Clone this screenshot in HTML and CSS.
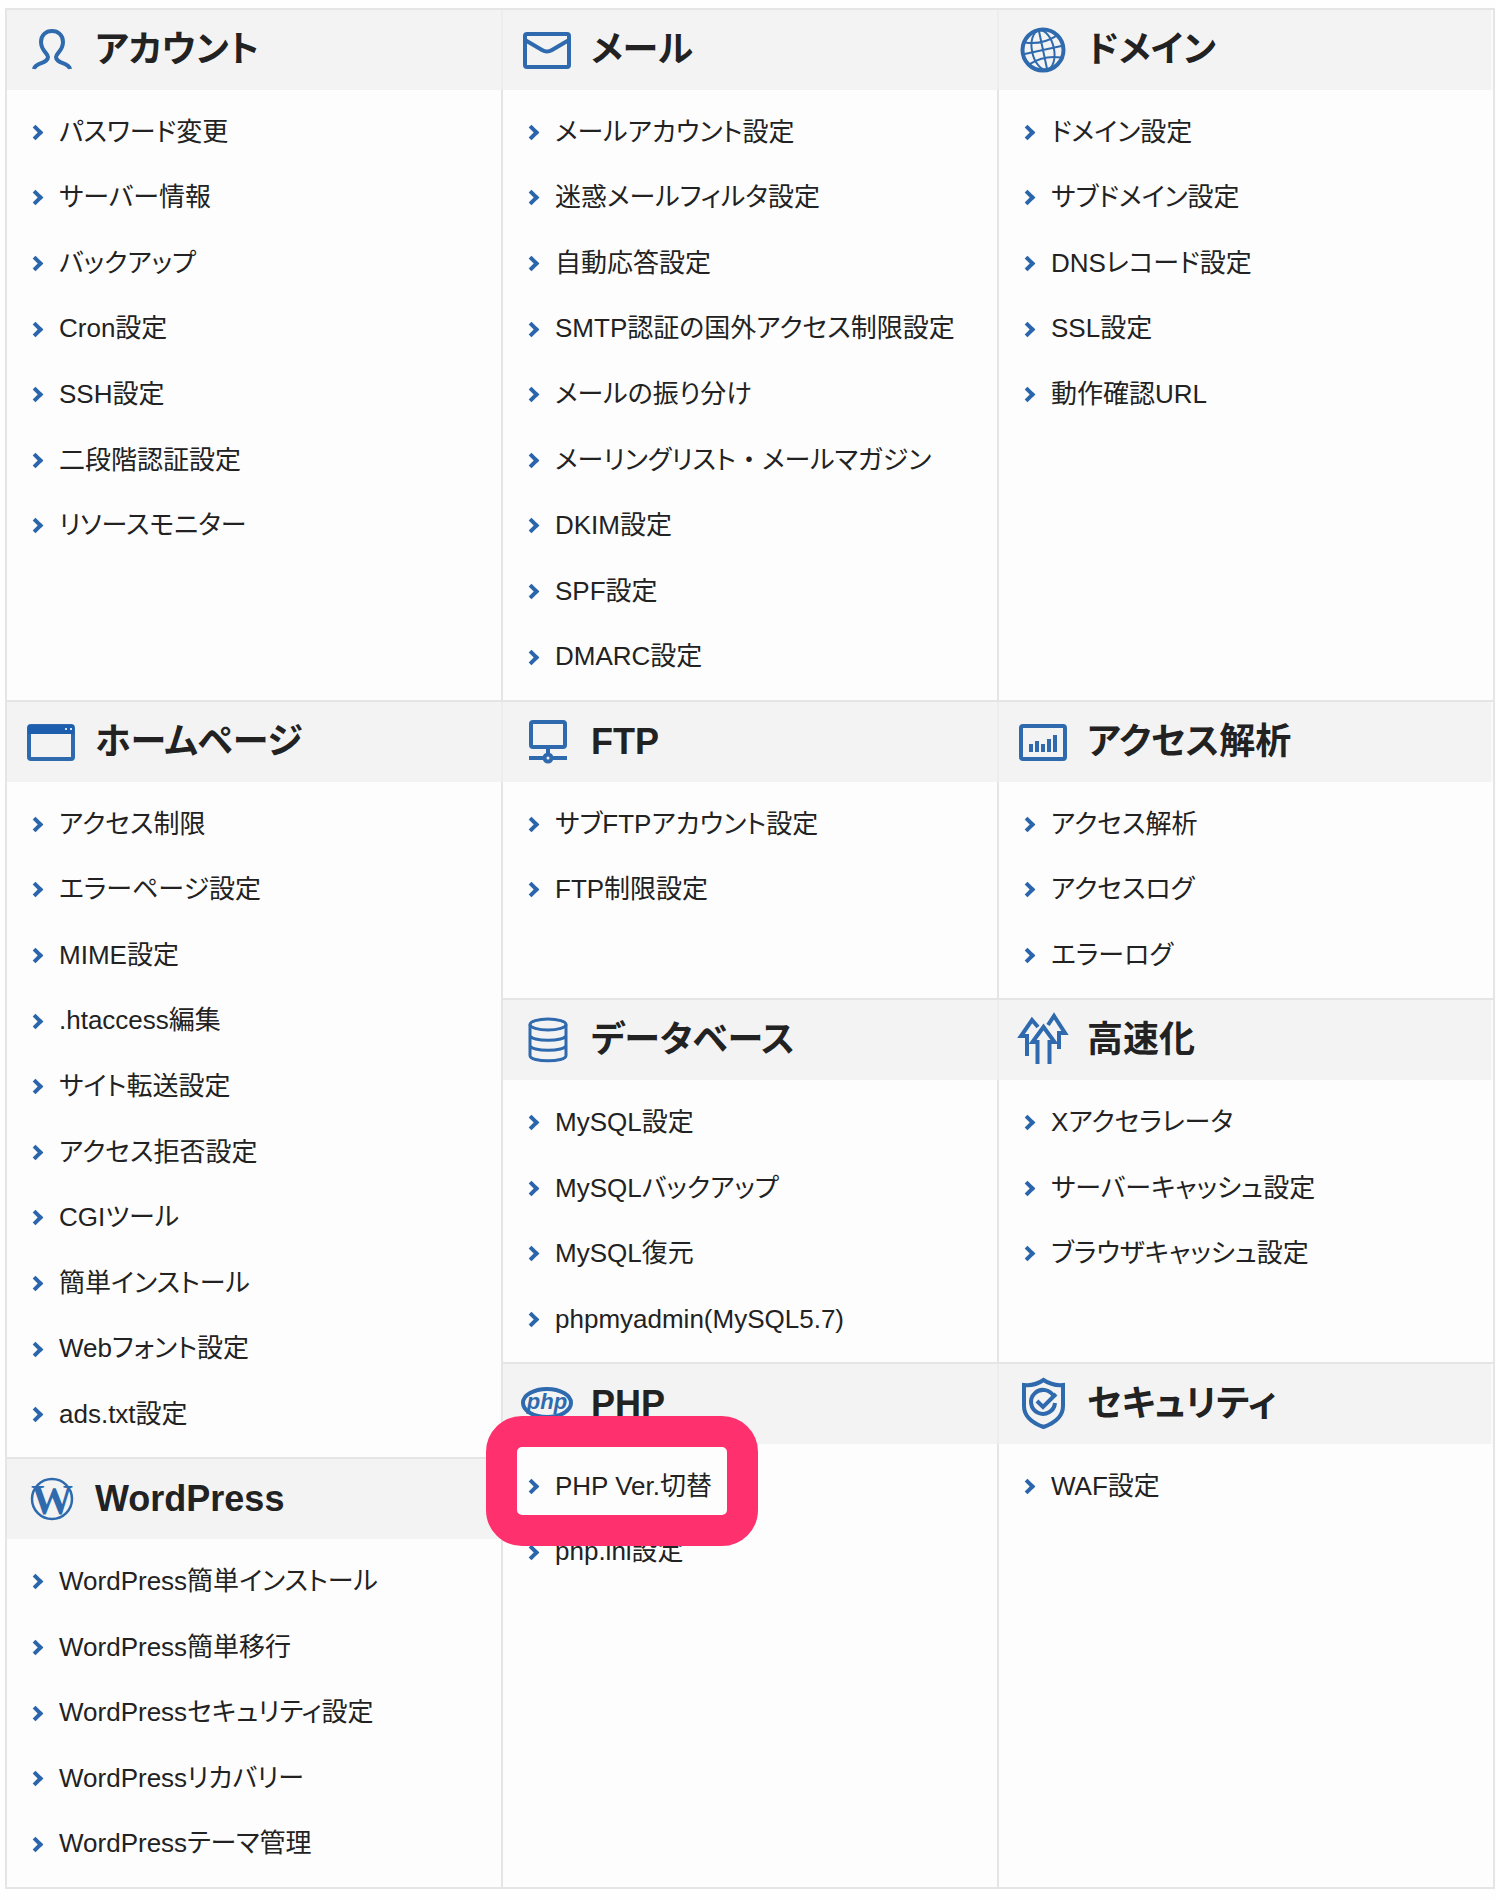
FILE: index.html
```
<!DOCTYPE html>
<html lang="ja">
<head>
  <meta charset="UTF-8">
  <title>サーバーパネル</title>
  <link rel="stylesheet" href="styles.css">
</head>
<body>
  <main class="menu">
    <section class="panel">
      <h2 class="panel-head">
        <svg class="icon" viewBox="0 0 48 48"><path d="M7 43c1-7 14-5 14-12 0-4-7-6-7-15 0-7 5-11 11-11s11 4 11 11c0 9-7 11-7 15 0 7 13 5 14 12"/></svg>
        アカウント
      </h2>
      <ul class="links">
        <li><a href="#">パスワード変更</a></li>
        <li><a href="#">サーバー情報</a></li>
        <li><a href="#">バックアップ</a></li>
        <li><a href="#">Cron設定</a></li>
        <li><a href="#">SSH設定</a></li>
        <li><a href="#">二段階認証設定</a></li>
        <li><a href="#">リソースモニター</a></li>
      </ul>
    </section>
    <section class="panel">
      <h2 class="panel-head">
        <svg class="icon" viewBox="0 0 48 48"><rect x="2" y="8" width="44" height="33" rx="2"/><path d="M2 14l17 10q5 3 10 0l17-10"/></svg>
        メール
      </h2>
      <ul class="links">
        <li><a href="#">メールアカウント設定</a></li>
        <li><a href="#">迷惑メールフィルタ設定</a></li>
        <li><a href="#">自動応答設定</a></li>
        <li><a href="#">SMTP認証の国外アクセス制限設定</a></li>
        <li><a href="#">メールの振り分け</a></li>
        <li><a href="#">メーリングリスト<span class="dot">・</span>メールマガジン</a></li>
        <li><a href="#">DKIM設定</a></li>
        <li><a href="#">SPF設定</a></li>
        <li><a href="#">DMARC設定</a></li>
      </ul>
    </section>
    <section class="panel panel-last">
      <h2 class="panel-head">
        <svg class="icon" viewBox="0 0 48 48"><circle cx="24" cy="24" r="20.5"/><g stroke-width="2" transform="rotate(-12 24 24)"><path d="M24 4v40M4 24h40M8 13q16 6 32 0M8 35q16-6 32 0"/><ellipse cx="24" cy="24" rx="11" ry="20"/></g></svg>
        ドメイン
      </h2>
      <ul class="links">
        <li><a href="#">ドメイン設定</a></li>
        <li><a href="#">サブドメイン設定</a></li>
        <li><a href="#">DNSレコード設定</a></li>
        <li><a href="#">SSL設定</a></li>
        <li><a href="#">動作確認URL</a></li>
      </ul>
    </section>

    <!-- left column runs beside three rows -->
    <div class="stack">
      <section class="panel">
        <h2 class="panel-head">
          <svg class="icon" viewBox="0 0 48 48"><rect x="2" y="8" width="44" height="33" rx="2"/><path class="solid" d="M1 7h46v9H1z"/><path class="dots" d="M38 11h2M43 11h2"/></svg>
          ホームページ
        </h2>
        <ul class="links">
          <li><a href="#">アクセス制限</a></li>
          <li><a href="#">エラーページ設定</a></li>
          <li><a href="#">MIME設定</a></li>
          <li><a href="#">.htaccess編集</a></li>
          <li><a href="#">サイト転送設定</a></li>
          <li><a href="#">アクセス拒否設定</a></li>
          <li><a href="#">CGIツール</a></li>
          <li><a href="#">簡単インストール</a></li>
          <li><a href="#">Webフォント設定</a></li>
          <li><a href="#">ads.txt設定</a></li>
        </ul>
      </section>
      <section class="panel panel-fill">
        <h2 class="panel-head">
          <svg class="icon" viewBox="0 0 48 48"><circle cx="25" cy="24" r="20" stroke-width="2.5"/><text class="wp-mark" x="25" y="39" text-anchor="middle">W</text></svg>
          WordPress
        </h2>
        <ul class="links">
          <li><a href="#">WordPress簡単インストール</a></li>
          <li><a href="#">WordPress簡単移行</a></li>
          <li><a href="#">WordPressセキュリティ設定</a></li>
          <li><a href="#">WordPressリカバリー</a></li>
          <li><a href="#">WordPressテーマ管理</a></li>
        </ul>
      </section>
    </div>

    <section class="panel">
      <h2 class="panel-head">
        <svg class="icon" viewBox="0 0 48 48"><rect x="8" y="4" width="34" height="25" rx="2"/><path d="M25 31v5M6 40h14M30 40h14"/><circle cx="25" cy="40" r="3.5"/></svg>
        FTP
      </h2>
      <ul class="links">
        <li><a href="#">サブFTPアカウント設定</a></li>
        <li><a href="#">FTP制限設定</a></li>
      </ul>
    </section>
    <section class="panel panel-last">
      <h2 class="panel-head">
        <svg class="icon" viewBox="0 0 48 48"><rect x="2" y="8" width="44" height="33" rx="2"/><path stroke-width="4" d="M12 34v-8M18 34V23M24 34v-8M30 34V21M36 34V17"/></svg>
        アクセス解析
      </h2>
      <ul class="links">
        <li><a href="#">アクセス解析</a></li>
        <li><a href="#">アクセスログ</a></li>
        <li><a href="#">エラーログ</a></li>
      </ul>
    </section>

    <section class="panel">
      <h2 class="panel-head">
        <svg class="icon" viewBox="0 0 48 48"><g stroke-width="3"><ellipse cx="25" cy="8.5" rx="18" ry="5.5"/><path d="M7 8.500v31c0 7 36 7 36 0v-31M7 19c0 7 36 7 36 0M7 29c0 7 36 7 36 0"/></g></svg>
        データベース
      </h2>
      <ul class="links">
        <li><a href="#">MySQL設定</a></li>
        <li><a href="#">MySQLバックアップ</a></li>
        <li><a href="#">MySQL復元</a></li>
        <li><a href="#">phpmyadmin(MySQL5.7)</a></li>
      </ul>
    </section>
    <section class="panel panel-last">
      <h2 class="panel-head">
        <svg class="icon" viewBox="0 0 48 48"><path d="M18.500 48V26h-5l11-15 11 15h-5v22M8 40V20H2L13 4l6 7M40 33V17h6L35 0l-6 9"/></svg>
        高速化
      </h2>
      <ul class="links">
        <li><a href="#">Xアクセラレータ</a></li>
        <li><a href="#">サーバーキャッシュ設定</a></li>
        <li><a href="#">ブラウザキャッシュ設定</a></li>
      </ul>
    </section>

    <section class="panel">
      <h2 class="panel-head">
        <svg class="icon" viewBox="0 0 48 48"><ellipse cx="24" cy="23" rx="24" ry="14"/><text class="php-mark" x="24" y="29" text-anchor="middle">php</text></svg>
        PHP
      </h2>
      <ul class="links">
        <li class="marked"><a href="#">PHP Ver.切替</a></li>
        <li><a href="#">php.ini設定</a></li>
      </ul>
    </section>
    <section class="panel panel-last">
      <h2 class="panel-head">
        <svg class="icon" viewBox="0 0 48 48"><path d="M24.500 0q9 6 19.500 5v21q0 14-19.500 21Q5 40 5 26V5q11 1 19.500-5z"/><path d="M35 17a12 12 0 1 0 1 6M18 21l6 6 13-13"/></svg>
        セキュリティ
      </h2>
      <ul class="links">
        <li><a href="#">WAF設定</a></li>
      </ul>
    </section>
  </main>
</body>
</html>
```
FILE: styles.css
```
*,
*::before,
*::after {
  padding: 0;
  margin: 0;
  box-sizing: border-box;
}
body {
  background: #fefefe;
  color: #222;
  font-family: "Liberation Sans", "Noto Sans CJK JP", sans-serif;
  font-feature-settings: "palt";
  font-size: 26px;
  line-height: 1.6;
}
/* the grid's background shows through the gaps as the rules */
.menu {
  display: grid;
  grid-template-columns: repeat(3, minmax(0, 1fr));
  grid-template-rows: auto auto auto 1fr;
  gap: 2px;
  margin: 8px 1px 8px 5px;
  border: 2px solid #e5e5e5;
  background: #e5e5e5;
}
.stack {
  display: flex;
  flex-direction: column;
  gap: 2px;
  grid-row: 2 / span 3;
}
.panel {
  background: #fdfdfd;
}
.panel-fill {
  flex: 1 1 auto;
}
.panel-head {
  display: flex;
  align-items: center;
  gap: 20px;
  margin-right: -2px;
  padding: 11px 20px;
  border-right: 2px solid #ededed;
  background: #f3f3f3;
  font-size: 36px;
  font-weight: bold;
}
.panel-last .panel-head {
  margin-right: 0;
  border-right-color: #fafafa;
}
.icon {
  flex: none;
  width: 48px;
  height: 48px;
  overflow: visible;
  fill: none;
  stroke: #2e6aad;
  stroke-width: 4;
}
.icon .solid {
  fill: #1d5fae;
  stroke: none;
}
.icon .dots {
  stroke: #cfe2f5;
  stroke-width: 2;
}
.icon text {
  fill: #2e6aad;
  stroke: none;
}
.wp-mark {
  font: bold 42px "Liberation Serif", serif;
}
.php-mark {
  font: italic bold 22px "Liberation Sans", sans-serif;
}
.links {
  padding: 10px 0;
  list-style: none;
}
.links a {
  display: flex;
  align-items: center;
  padding: 12px 0 12px 23px;
  color: inherit;
  text-decoration: none;
  white-space: nowrap;
}
.links a::before {
  content: "";
  width: 11px;
  height: 11px;
  margin-right: 18px;
  border: solid #2a66ab;
  border-width: 4px 4px 0 0;
  transform: rotate(45deg);
}
.dot {
  font-feature-settings: normal;
}
.marked {
  position: relative;
}
.marked::after {
  content: "";
  position: absolute;
  z-index: 1;
  top: -38px;
  left: -17px;
  width: 272px;
  height: 130px;
  border: 31px solid #ff306e;
  border-radius: 36px;
  pointer-events: none;
}
```
